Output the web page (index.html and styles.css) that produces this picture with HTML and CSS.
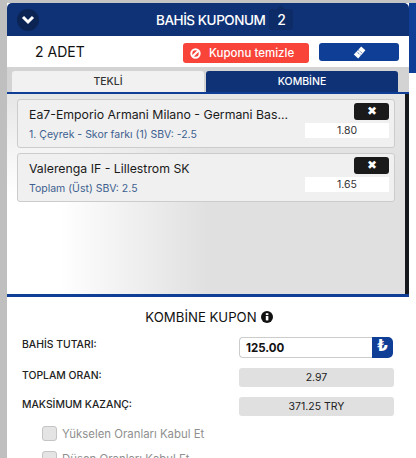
FILE: index.html
```html
<!DOCTYPE html>
<html>
	<head>
		<meta charset="utf-8" />
		<title>Bahis Kuponum</title>
		<link rel="stylesheet" href="styles.css">
	</head>
	<body>
		<div class="gutter-left"></div>
		<article class="panel">
			<header class="top">
				<a class="toggle">
					<svg width="14" height="10" viewBox="0 0 14 10"><path d="M2 2l5 5 5-5" fill="none" stroke="#fff" stroke-width="3"/></svg>
				</a>
				<span class="top-title">BAHİS KUPONUM</span>
				<span class="count">2</span>
			</header>
			<div class="actions">
				<span class="adet">2 ADET</span>
				<a class="btn-clear">
					<svg width="11" height="11" viewBox="0 0 11 11"><circle cx="5.5" cy="5.5" r="4.2" fill="none" stroke="#fff" stroke-width="2"/><path d="M2.7 8.3l5.6-5.6" stroke="#fff" stroke-width="2"/></svg>
					Kuponu temizle
				</a>
				<a class="btn-ticket">
					<svg width="13" height="13" viewBox="0 0 13 13"><path d="M8.2.6l4.2 3.6-7.2 8.2L.8 8.6z" fill="#fff"/><path d="M5.2 3.8l4.2 3.6M3.6 5.6l4.2 3.6" stroke="#0f3e96" stroke-width=".8" stroke-dasharray="1.2 .8"/></svg>
				</a>
			</div>
			<nav class="tabs">
				<a class="tab">TEKLİ</a>
				<a class="tab tab-on">KOMBİNE</a>
			</nav>
			<section class="list">
				<div class="cards">
					<div class="card">
						<div class="card-text">
							<p class="match">Ea7-Emporio Armani Milano - Germani Bas...</p>
							<p class="market">1. Çeyrek - Skor farkı (1) SBV: -2.5</p>
						</div>
						<div class="card-side">
							<a class="btn-x">&#10006;</a>
							<span class="odd">1.80</span>
						</div>
					</div>
					<div class="card">
						<div class="card-text">
							<p class="match">Valerenga IF - Lillestrom SK</p>
							<p class="market">Toplam (Üst) SBV: 2.5</p>
						</div>
						<div class="card-side">
							<a class="btn-x">&#10006;</a>
							<span class="odd">1.65</span>
						</div>
					</div>
				</div>
				<div class="scrollbar"></div>
			</section>
			<section class="summary">
				<h2 class="sum-title">KOMBİNE KUPON
					<svg width="12" height="12" viewBox="0 0 13 13"><circle cx="6.5" cy="6.5" r="6.5" fill="#111"/><rect x="5.2" y="5.4" width="2.8" height="4.8" fill="#fff"/><rect x="5.2" y="2.4" width="2.8" height="2" fill="#fff"/></svg>
				</h2>
				<div class="row row-input">
					<label>BAHİS TUTARI:</label>
					<div class="stake">
						<span class="stake-value">125.00</span>
						<span class="stake-cur">₺</span>
					</div>
				</div>
				<div class="row">
					<label>TOPLAM ORAN:</label>
					<span class="val">2.97</span>
				</div>
				<div class="row row-last">
					<label>MAKSİMUM KAZANÇ:</label>
					<span class="val">371.25 TRY</span>
				</div>
				<div class="check"><i></i>Yükselen Oranları Kabul Et</div>
				<div class="check"><i></i>Düşen Oranları Kabul Et</div>
			</section>
		</article>
		<div class="gutter-right"><div class="edge"></div></div>
	</body>
</html>
```

FILE: styles.css
```css
*{margin: 0;padding: 0;box-sizing: border-box;}
html,body{height: 458px;overflow: hidden;}
body{
	display: flex;
	background: #fff;
	font-family: "Inter","Noto Sans",sans-serif;
	color: #1c1c1c;
}
a{text-decoration: none;}
.gutter-left{
	width: 7px;
	background: #bfbfbf;
}
.gutter-right{
	width: 7px;
}
.edge{
	height: 73px;
	background: linear-gradient(#c4c4c4 3px,#0f3e96 3px);
}
.panel{
	width: 402px;
	height: 458px;
	overflow: hidden;
	background: linear-gradient(#c4c4c4 3px,#fff 3px);
}
.top{
	display: flex;
	align-items: center;
	height: 33px;
	margin-top: 3px;
	padding-left: 10px;
	background: #0f3277;
	border-radius: 5px 5px 0 0;
	color: #fff;
}
.toggle{
	display: flex;
	align-items: center;
	justify-content: center;
	width: 22px;
	height: 22px;
	border-radius: 50%;
	background: #0b2454;
}
.top-title{
	margin-left: 117px;
	font-size: 13.5px;
	font-weight: 500;
	letter-spacing: -0.45px;
}
.count{
	position: relative;
	width: 24px;
	height: 21px;
	margin-left: 4px;
	border-radius: 3px;
	background: #0d2b66;
	text-align: center;
	line-height: 21px;
	font-size: 14px;
	font-weight: 500;
}
.count::before{
	content: "";
	position: absolute;
	top: -4px;
	left: 8px;
	border: 4px solid transparent;
	border-top: 0;
	border-bottom-color: #0d2b66;
}
.actions{
	display: flex;
	align-items: flex-start;
	height: 31px;
	padding: 7px 10px 0 28px;
	background: #fff;
}
.adet{
	width: 148px;
	font-size: 14px;
	line-height: 18px;
	color: #111;
}
.btn-clear{
	display: flex;
	align-items: center;
	gap: 8px;
	width: 126px;
	height: 20px;
	padding-left: 7px;
	margin-right: 10px;
	background: #f9443a;
	border-radius: 3px;
	color: #fff;
	font-size: 11.5px;
	font-weight: 500;
}
.btn-ticket{
	display: flex;
	align-items: center;
	justify-content: center;
	width: 80px;
	height: 18px;
	background: #0f3e96;
	border-radius: 3px;
}
.tabs{
	display: flex;
	gap: 2px;
	height: 27px;
	padding: 4px 11px 0 5px;
	background: #d3d3d3;
	border-bottom: 2px solid #0f3e96;
}
.tab{
	flex: 1;
	border-radius: 3px 3px 0 0;
	background: #f1f1f1;
	text-align: center;
	line-height: 21px;
	font-size: 10.5px;
	font-weight: 500;
	color: #333;
}
.tab-on{
	background: #0f3277;
	color: #fff;
}
.list{
	display: flex;
	height: 200px;
	background: linear-gradient(#e6e6e6,rgba(230,230,230,0) 100px),linear-gradient(to right,#fff 13%,#e0e0e0 50%);
}
.cards{
	flex: 1;
	padding: 5px 3px 0 10px;
}
.scrollbar{
	width: 11px;
	border-right: 4px solid #15181c;
}
.card{
	display: flex;
	justify-content: space-between;
	height: 49px;
	margin-bottom: 5px;
	padding: 3px 5px 0 11px;
	background: #f0f0f0;
	border: 1px solid #ccc;
	border-radius: 3px;
}
.match{
	margin-top: 4px;
	font-size: 12.3px;
	line-height: 16px;
	color: #1a1a1a;
}
.market{
	margin-top: 5px;
	font-size: 10.5px;
	line-height: 14px;
	color: #3d5f8f;
}
.card-side{
	display: flex;
	flex-direction: column;
	align-items: flex-end;
	gap: 3px;
}
.btn-x{
	width: 35px;
	height: 17px;
	border-radius: 3px;
	background: #1a1a1a;
	color: #fff;
	text-align: center;
	line-height: 16px;
	font-size: 12px;
}
.odd{
	width: 84px;
	height: 15px;
	background: #fff;
	text-align: center;
	line-height: 15px;
	font-size: 10.5px;
	color: #333;
}
.summary{
	height: 161px;
	padding: 0 15px;
	background: #fff;
	border-top: 3px solid #0f3e96;
}
.sum-title{
	display: flex;
	align-items: center;
	justify-content: center;
	gap: 4px;
	height: 34px;
	margin: 3px 0 3px 2px;
	font-size: 13.2px;
	font-weight: 400;
	color: #111;
}
.row{
	display: flex;
	justify-content: space-between;
	align-items: flex-start;
	height: 29px;
	font-size: 10.4px;
}
.row-input{
	height: 31px;
}
.row-last{
	height: 24px;
}
.row label{
	line-height: 14px;
	font-weight: 500;
	color: #222;
	margin-top: 1px;
}
.stake{
	display: flex;
	width: 154px;
	height: 21px;
	margin-right: 1px;
}
.stake-value{
	flex: 1;
	padding-left: 6px;
	border: 1px solid #ccc;
	border-right: 0;
	border-radius: 4px 0 0 4px;
	font-size: 11.5px;
	font-weight: 700;
	line-height: 20px;
	color: #111;
}
.stake-cur{
	width: 21px;
	background: #0f3e96;
	border-radius: 0 5px 5px 0;
	color: #fff;
	text-align: center;
	font-family: "DejaVu Sans",sans-serif;
	font-size: 15px;
	font-weight: 700;
	line-height: 19px;
}
.val{
	width: 155px;
	height: 19px;
	background: #e0e0e0;
	border-radius: 3px;
	text-align: center;
	font-size: 10.5px;
	line-height: 19px;
	color: #222;
}
.check{
	display: flex;
	align-items: center;
	gap: 5px;
	height: 25px;
	padding-left: 20px;
	font-size: 11.4px;
	color: #8f8f8f;
}
.check i{
	width: 15px;
	height: 15px;
	background: #e4e4e4;
	border: 1px solid #c4c4c4;
	border-radius: 3px;
}
```
